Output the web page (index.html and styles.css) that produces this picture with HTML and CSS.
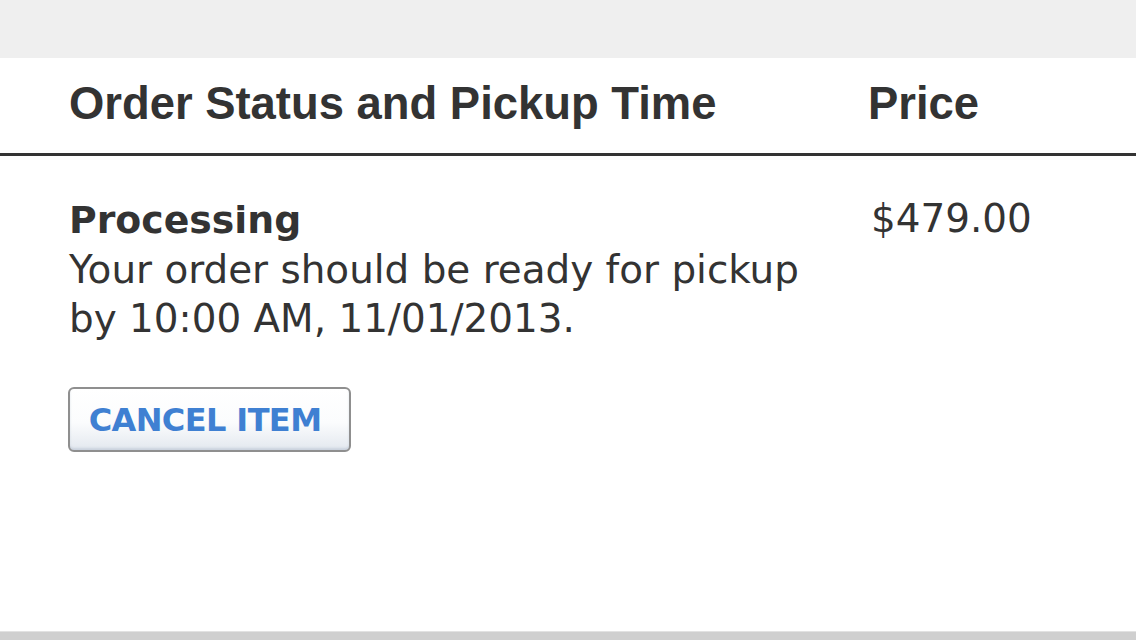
FILE: index.html
```html
<!DOCTYPE html>
<html>
<head>
<meta charset="utf-8">
<link rel="stylesheet" href="styles.css">
</head>
<body>
<div class="page">
  <div class="topbar"></div>
  <div class="panel">
    <div class="head-row">
      <div class="col-main head">Order Status and Pickup Time</div>
      <div class="col-price head">Price</div>
    </div>
    <div class="item-row">
      <div class="col-main">
        <div class="status">Processing</div>
        <div class="desc">Your order should be ready for pickup<br>by 10:00 AM, 11/01/2013.</div>
        <button class="cancel">CANCEL ITEM</button>
      </div>
      <div class="col-price price">$479.00</div>
    </div>
  </div>
  <div class="bottombar"></div>
</div>
</body>
</html>
```
FILE: styles.css
```css
html, body {
  margin: 0;
  padding: 0;
  background: #ffffff;
}
.page {
  width: 1136px;
  height: 640px;
  display: flex;
  flex-direction: column;
  overflow: hidden;
}
.topbar {
  height: 58px;
  background: #efefef;
  flex: none;
}
.panel {
  flex: 1;
  background: #ffffff;
}
.head-row {
  display: flex;
  padding: 20px 0 23px 69px;
  border-bottom: 3px solid #333333;
}
.head {
  font-family: "Liberation Sans", Arial, sans-serif;
  font-weight: bold;
  font-size: 45.4px;
  line-height: 52px;
  color: #333333;
}
.col-main {
  width: 799px;
  flex: none;
}
.col-price {
  flex: 1;
}
.item-row {
  display: flex;
  padding: 40px 0 0 69px;
  font-family: "DejaVu Sans", Verdana, sans-serif;
  font-size: 38.9px;
  line-height: 49px;
  color: #333333;
}
.status {
  font-weight: bold;
  font-size: 37.8px;
}
.price {
  padding-left: 3px;
  margin-top: -2px;
}
.cancel {
  display: block;
  margin-top: 44px;
  width: 283px;
  height: 65px;
  padding: 0 9px 0 0;
  margin-left: -1px;
  border: 2px solid #8f8f8f;
  border-radius: 6px;
  background: linear-gradient(to bottom, #ffffff 0%, #fbfcfd 55%, #e3e8ef 100%);
  box-shadow: inset 0 -2px 2px rgba(180,190,205,0.5);
  font-family: "DejaVu Sans", Verdana, sans-serif;
  font-weight: bold;
  font-size: 32px;
  letter-spacing: -0.6px;
  color: #3f80d2;
  text-align: center;
  line-height: 60px;
}
.bottombar {
  height: 8px;
  flex: none;
  background: #cfcfcf;
  border-top: 1px solid #e2e2e2;
}
```
